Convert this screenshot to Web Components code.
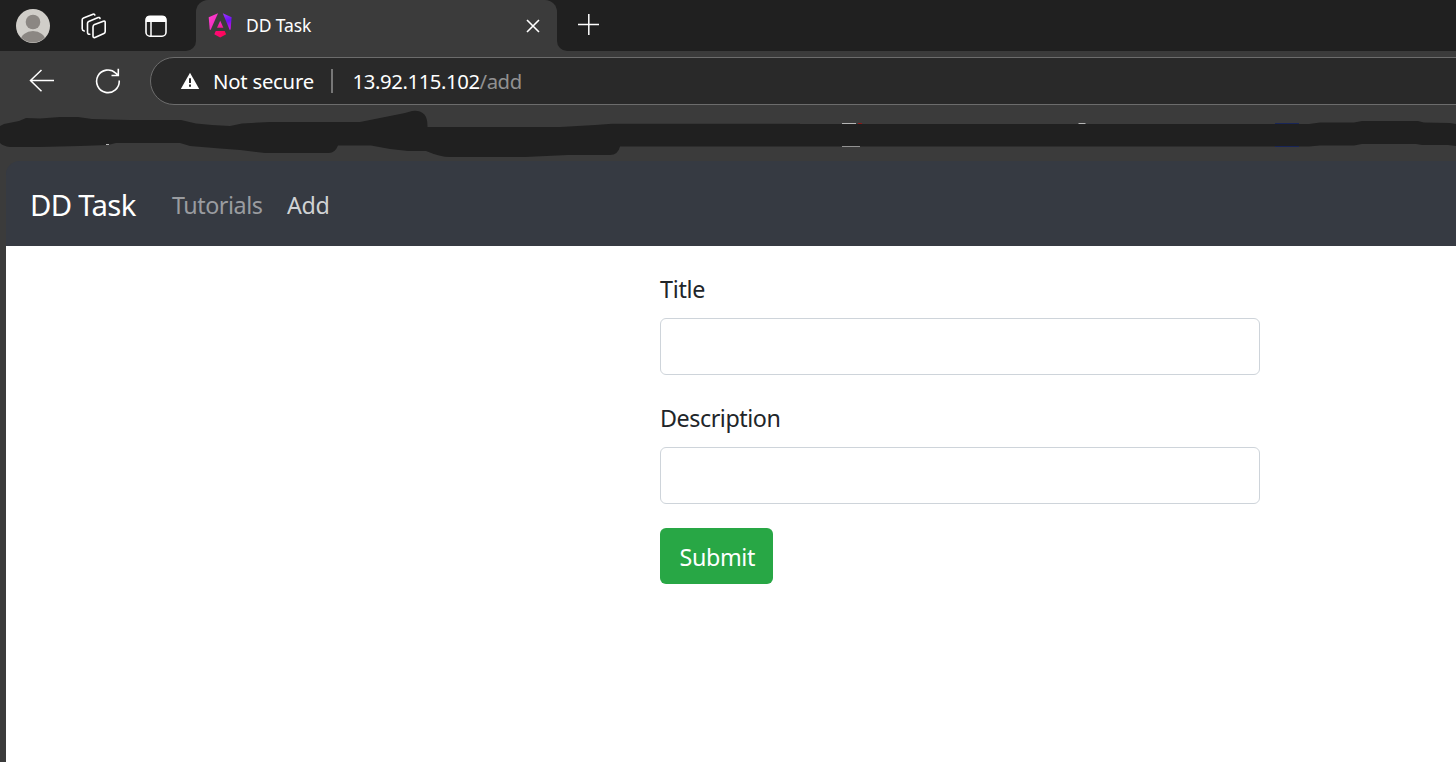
<!DOCTYPE html>
<html lang="en">
<head>
<meta charset="utf-8">
<title>DD Task</title>
<style>
html,body{margin:0;height:100%;overflow:hidden;background:#3b3b3b}
body{font-family:"Noto Sans","Open Sans",sans-serif}
</style>
</head>
<body>
<browser-window>
  <tab-strip slot="tabs"><fit-label width="64">DD Task</fit-label></tab-strip>
  <address-bar slot="address"></address-bar>
  <bookmarks-bar slot="bookmarks"></bookmarks-bar>
  <app-page></app-page>
</browser-window>
<script>
const define = (name, html, init) => {
  const t = document.createElement('template');
  t.innerHTML = html;
  customElements.define(name, class extends HTMLElement {
    constructor() {
      super();
      this.attachShadow({mode: 'open'}).append(document.importNode(t.content, true));
    }
    connectedCallback() { if (init) init(this); }
  });
};

define('browser-window', `
<style>:host{display:flex;flex-direction:column;width:100%;height:100vh;overflow:hidden;background:#3b3b3b}
main{flex:1;display:flex;padding-left:6px;min-height:0}</style>
<slot name="tabs"></slot><slot name="address"></slot><slot name="bookmarks"></slot>
<main><slot></slot></main>`);

define('tab-strip', `
<style>
:host{display:flex;height:51px;background:#3b3b3b;color:#fff;font-size:17.5px}
svg{display:block;flex:none}
.left{width:196px;box-sizing:border-box;background:#202020;border-bottom-right-radius:10px;display:flex;align-items:center;padding:1px 0 0 15px}
.mid{width:361px;background:linear-gradient(#202020 50%,#3b3b3b 50%)}
.tab{height:51px;box-sizing:border-box;background:#3b3b3b;border-radius:12px 12px 0 0;display:flex;align-items:center;padding:0 16px 0 11px}
.name{margin-left:13px;flex:1}
.right{flex:1;background:#202020;border-bottom-left-radius:10px;display:flex;align-items:center;padding-left:20px}
</style>
<div class="left">
<svg width="36" height="36" viewBox="0 0 36 36"><defs><clipPath id="c"><circle cx="18" cy="18" r="16.6"/></clipPath></defs><circle cx="18" cy="18" r="17" fill="#d0cec9"/><g clip-path="url(#c)" fill="#8b8783"><circle cx="18" cy="14" r="7.3"/><ellipse cx="18" cy="33" rx="12.5" ry="10"/></g></svg>
<svg style="margin-left:29.500px" width="26" height="26" viewBox="0 0 26 26" fill="none" stroke="#fff" stroke-width="1.6" stroke-linejoin="round" stroke-linecap="round"><path d="M14.300 11.300 22.3 8.2Q24.2 7.6 24.2 9.5V18.5Q24.2 20 22.9 20.6L14 24.5Q12 25.1 12 23V14Q12 12.200 13.500 11.600Z"/><path d="M8.8 21.2Q6.5 21.4 6.5 19.2V10.2Q6.5 8.9 7.7 8.4L17.2 4.6Q18.6 4.1 19 5.5"/><path d="M3.2 18Q1.2 17.6 1.2 15.8V6.8Q1.2 5.5 2.5 5L12 1.2Q13.4.7 13.8 2"/></svg>
<svg style="margin-left:37.500px" width="24" height="24" viewBox="0 0 24 24"><rect x="2" y="2.2" width="20" height="20" rx="4" fill="none" stroke="#fff" stroke-width="1.6"/><path d="M1.8 8V5Q2 2 5 2H19Q22 2 22.2 5V8Z" fill="#fff"/><path d="M7 8V22" stroke="#fff" stroke-width="1.5"/></svg>
</div>
<div class="mid"><div class="tab">
<svg width="27" height="27" viewBox="0 0 27 27"><defs><linearGradient id="l" x2="1" y2="1"><stop stop-color="#ff42cf"/><stop offset="1" stop-color="#ee20b9"/></linearGradient><linearGradient id="r" y2="1" x2=".2"><stop stop-color="#a335ff"/><stop offset=".55" stop-color="#6c12f2"/><stop offset="1" stop-color="#c514e6"/></linearGradient><linearGradient id="b" x2="1"><stop stop-color="#ff087a"/><stop offset="1" stop-color="#fb0752"/></linearGradient><linearGradient id="m" y2="1" x2="0"><stop stop-color="#ee35d3"/><stop offset="1" stop-color="#f51992"/></linearGradient></defs><path d="M11 1.2 3.6 18 2.7 17.5 1.7 5.2Z" fill="url(#l)"/><path d="M15.8 1.2 24.6 5.2 23.6 17.5 22.7 18Z" fill="url(#r)"/><path d="M13.200 8.800 16.4 15.8H10Z" fill="url(#m)"/><path d="M8.800 18.9H17.6L19.2 22.2 13.200 25.500 7.300 22.2Z" fill="url(#b)"/></svg>
<div class="name"><slot></slot></div>
<svg width="16" height="16" viewBox="0 0 16 16" style="margin-top:1px"><path d="M2 2 14 14M14 2 2 14" stroke="#fff" stroke-width="1.6"/></svg>
</div></div>
<div class="right"><svg width="23" height="23" viewBox="0 0 23 23" style="margin-top:-2px"><path d="M1 11.5H22M11.8 1V22" stroke="#fff" stroke-width="1.5"/></svg></div>`);

define('address-bar', `
<style>
:host{display:flex;height:54px;box-sizing:border-box;padding-top:6px;align-items:stretch;color:#fff;font-size:20.3px}
svg{display:block;flex:none}
.nav{width:150px;box-sizing:border-box;display:flex;align-items:center;padding-left:28px;gap:39px}
.box{flex:1;box-sizing:border-box;height:48px;margin-right:-60px;background:#292929;border:1.5px solid #6c6c6c;border-radius:24px;display:flex;align-items:center;padding-left:28.500px}
.state{margin-left:14.500px}.rule{width:2px;height:24px;background:#777;margin:0 20px 0 17px}.path{color:#919191;margin-left:1px}
</style>
<div class="nav">
<svg width="28" height="26" viewBox="0 0 28 26" fill="none" stroke="#fff" stroke-width="1.5" style="margin-top:-1px"><path d="M2.5 12.500H26M13.5 2 2.5 12.500 13.5 23.300"/></svg>
<svg width="27" height="28" viewBox="0 0 27 28" fill="none" stroke="#fff" stroke-width="1.6" style="margin-top:-1px"><path d="M24.2 13.5A11.3 11.3 0 1 1 20.8 6.2L23.3 8.500M23.3 1.8V8.500H16.500"/></svg>
</div>
<div class="box">
<svg width="20" height="18" viewBox="0 0 20 18"><path d="M10 .8 19.2 17H.8Z" fill="#fff"/><path d="M10 6.2V11M10 12.6V14.8" stroke="#292929" stroke-width="2"/></svg>
<fit-label class="state" width="99.500">Not secure</fit-label><div class="rule"></div>
<fit-label width="126">13.92.115.102</fit-label><fit-label class="path" width="41">/add</fit-label>
</div>`);

define('bookmarks-bar', `
<style>:host{display:block;height:56px}svg{display:block}</style>
<svg width="1456" height="56" viewBox="0 105 1456 56">
<path fill="#202020" d="M0 126 4 124 19 121 26 118 40 118.5 60 117H78L92 119 130 120H181L196 123.5 212 125 230 126 242 123.5 270 122H360L385 117 405 113 412 111Q428 109 427.500 127H560L595 125 612 123.700H800V124H1309L1320 122.500H1354L1362 121H1418L1424 122.500 1450 123 1456 124V146L1448 145H1422L1416 144H1362L1354 145.500H1320L1309 146.500H620Q618 155 610 155H568L525 157H450Q440 157 426 151H408L390 149 371 145.500H338Q335 153 329 153H265L240 150 220 148.500 190 146 180 143H116L108 145 80 146 40 147H10Q3 146 0 143Z"/>
<path d="M842 123.5H856M1078.500 123.5H1085.500M106 144.5H109" stroke="#b5b5b5"/><path d="M842 146.5H860" stroke="#929292"/><path d="M858 123.5H862" stroke="#8d1818"/>
<path d="M1275 123.5H1299M1275 146.5H1299" stroke="#182558"/>
</svg>`);

define('app-page', `
<style>:host{flex:1;display:flex;flex-direction:column;background:linear-gradient(#363a42 50px,#fff 50px);border-top-left-radius:14px;overflow:hidden}</style>
<app-navbar></app-navbar><task-form></task-form>`);

define('app-navbar', `
<style>
:host{display:flex;height:85px;background:#363a42;align-items:center;padding:5px 0 0 25px;box-sizing:border-box;font-size:23.300px}
.brand{font-size:29.300px;color:#fff;margin-right:37px}
.muted,.on{margin-top:-2px}
.muted{color:#9a9ca0;margin-right:26px}.on{color:#d0d2d4}
</style>
<fit-label class="brand" width="104">DD Task</fit-label>
<fit-label class="muted" width="89">Tutorials</fit-label>
<fit-label class="on" width="41">Add</fit-label>`);

define('form-field', `
<style>
:host{display:block;margin-bottom:24px}
label{display:flex;align-items:center;height:36px;padding-top:2px;margin-bottom:12px;box-sizing:border-box;color:#212529;font-size:23.300px}
label ::slotted(*){position:static}
input{display:block;width:100%;height:57px;box-sizing:border-box;border:1px solid #ced4da;border-radius:6px;background:#fff;padding:0 18px;font:inherit;outline:0}
</style>
<label><slot></slot></label><input type="text">`);

define('task-form', `
<style>
:host{display:block;width:600px;margin:24px 0 0 654px}
.wide{padding-left:1px}
button{display:flex;align-items:center;justify-content:center;width:113px;height:56px;border:0;border-radius:6px;background:#28a745;color:#fff;font:23.300px "Noto Sans",sans-serif;padding:3px 0 0}
</style>
<form-field><fit-label width="43.500">Title</fit-label></form-field>
<form-field><fit-label class="wide" width="119">Description</fit-label></form-field>
<button type="button"><fit-label width="74">Submit</fit-label></button>`);

/* A single line of text whose letter spacing is adjusted to fill a given width. */
define('fit-label', `
<style>:host{display:block;flex:none;white-space:nowrap;line-height:1.4}span{display:inline-block}</style><span><slot></slot></span>`,
el => {
  const span = el.shadowRoot.querySelector('span');
  const width = +el.getAttribute('width'), n = el.textContent.trim().length;
  const size = parseFloat(getComputedStyle(el).fontSize);
  const natural = span.getBoundingClientRect().width - size * 0.08;
  span.style.letterSpacing = ((width - natural) / (n - 1)).toFixed(3) + 'px';
  span.style.marginLeft = /^[DN]/.test(el.textContent.trim()) ? '-1px' : '0';
  el.style.width = width + 'px';
});
</script>
</body>
</html>
